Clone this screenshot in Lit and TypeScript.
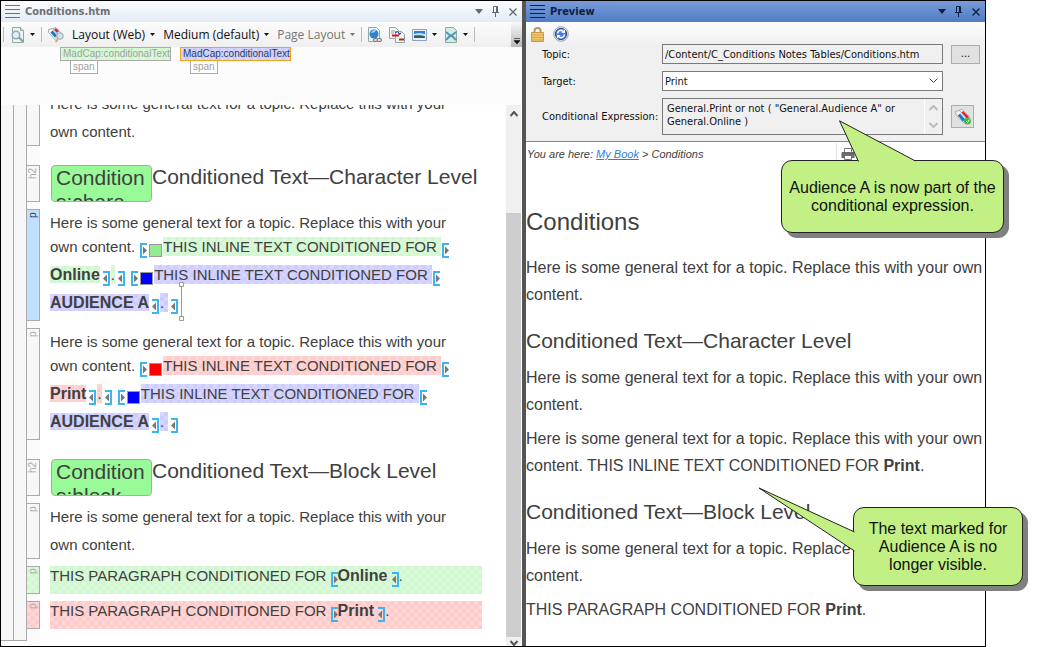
import { LitElement, html, css, svg } from "lit";
import { customElement, property } from "lit/decorators.js";

const caret = html`<svg class="caret" width="5" height="3" viewBox="0 0 5 3"><path d="M0 0h5L2.5 3z" fill="currentColor"/></svg>`;
const openMark = html`<svg class="mark open" width="7" height="15" viewBox="0 0 7 15"><path d="M7 1H1v13h6" fill="none" stroke="#3cb4f0" stroke-width="2"/><path d="M3 3.500v8l4-4z" fill="#777"/></svg>`;
const closeMark = html`<svg class="mark close" width="7" height="15" viewBox="0 0 7 15"><path d="M0 1h6v13H0" fill="none" stroke="#3cb4f0" stroke-width="2"/><path d="M4 3.500v8l-4-4z" fill="#777"/></svg>`;

const pageOutline = svg`<path d="M2.500 .5h8l3 3v12h-11z" fill="#eef6f3" stroke="#8fa8a4"/><path d="M10.500 .5v3h3" fill="#d5e5e1" stroke="#8fa8a4"/>`;

const icons = {
  pageZoom: html`<svg width="15" height="16" viewBox="0 0 15 16">${pageOutline}<circle cx="6" cy="8" r="3.800" fill="#dceef6" stroke="#98a8ae" stroke-width="1.500"/><path d="M9 10.500l4 4" stroke="#8b9ea6" stroke-width="2.200"/></svg>`,
  tags: html`<svg width="16" height="16" viewBox="0 0 16 16"><path d="M5 1.500l3-1 5 6-2 4z" fill="#fff" stroke="#999" stroke-width=".8"/><path d="M7 2l3 3" stroke="#e0202c" stroke-width="2.500"/><path d="M.5 2.500l4-1 6 7-3.500 4-6.500-7z" fill="#f5f5f5" stroke="#999" stroke-width=".8"/><path d="M3.500 4.500l4.500 5" stroke="#1878c8" stroke-width="3"/><circle cx="12" cy="9" r="3.300" fill="#d4e0ea" stroke="#98a8b6"/><path d="M10 12l-2.500 3" stroke="#d8a878" stroke-width="2"/></svg>`,
  web: html`<svg width="14" height="16" viewBox="0 0 14 16"><path d="M.5 .5h8l3 3v11H.5z" fill="#eef7f4" stroke="#8fa8a4"/><circle cx="6" cy="7" r="4.500" fill="#2f82d0"/><path d="M3 6q2-4 5-3-1 3-5 3z" fill="#9fd3f7"/><rect x="5.500" y="11.500" width="4.500" height="3" rx="1.500" fill="#ddd" stroke="#777"/><rect x="9" y="11.500" width="4.500" height="3" rx="1.500" fill="#ddd" stroke="#777"/></svg>`,
  merge: html`<svg width="16" height="16" viewBox="0 0 16 16"><path d="M.5 .5h6l3 3v8h-9z" fill="#f1f8f6" stroke="#8fa8a4"/><path d="M6.500 4.500h6l3 3v8h-9z" fill="#f1f8f6" stroke="#8fa8a4"/><path d="M2 4h4M2 6h3" stroke="#999"/><path d="M6 5.500q3-2 5 1.500M9 6.500l2 1 1-2" fill="none" stroke="#2444a8"/><path d="M3 8.500h7M10 12.500h5" stroke="#d01818" stroke-width="2"/></svg>`,
  image: html`<svg width="15" height="12" viewBox="0 0 15 12"><path d="M.5 .5h14v11H.5z" fill="#e9f2fa" stroke="#8ba3b8"/><path d="M2 2h11v4H2z" fill="#2f7fd4"/><path d="M2 5q5-2 11 0v2H2z" fill="#b9dcf3"/><path d="M2 6.500q7-1 11 1V9H2z" fill="#2f5c54"/></svg>`,
  sheetX: html`<svg width="14" height="16" viewBox="0 0 14 16"><path d="M1.500 .5h8l3 3v12h-11z" fill="#d7ebe5" stroke="#8fa8a4"/><path d="M2 5l5 4 5-4M6 9l-4 4M8 9l4 4" fill="none" stroke="#4f98b4" stroke-width="2"/></svg>`,
  lock: html`<svg width="13" height="15" viewBox="0 0 13 15"><path d="M3.500 6V4a3 3 0 0 1 6 0v2" fill="none" stroke="#b49a62" stroke-width="2"/><path d="M.5 5.500h12v9H.5z" fill="#efc76c" stroke="#c99c44"/><path d="M1 8h11M1 10.500h11M1 13h11" stroke="#d3a54c"/></svg>`,
  refresh: html`<svg width="16" height="16" viewBox="0 0 16 16"><circle cx="8" cy="8" r="7.300" fill="#e0e0e4" stroke="#a5a5ad"/><circle cx="8" cy="8" r="5.600" fill="#4c7ce0" stroke="#274aa4"/><path d="M4.500 7.500a3.500 3.500 0 0 1 6-2M11.500 8.500a3.500 3.500 0 0 1-6 2" fill="none" stroke="#fff" stroke-width="1.600"/><path d="M12 3.500V7H8.500zM4 12.500V9h3.500z" fill="#fff"/></svg>`,
  tagsCheck: html`<svg width="16" height="16" viewBox="0 0 16 16"><path d="M4 1.500l3-1 8 8-2 4z" fill="#fff" stroke="#999" stroke-width=".8"/><path d="M7 3l6 6" stroke="#e0202c" stroke-width="3"/><path d="M.5 2.500l4-1 7 8-3 4-7.500-8z" fill="#f5f5f5" stroke="#999" stroke-width=".8"/><path d="M4 5.500l5 6" stroke="#1878c8" stroke-width="3"/><circle cx="12.500" cy="12" r="3.500" fill="#45b649"/><path d="M11 12l1.500 1.500 2-3" fill="none" stroke="#fff"/></svg>`,
  printer: html`<svg width="14" height="14" viewBox="0 0 14 14"><path d="M3.500 5V1.500h7V5" fill="#fff" stroke="#777"/><path d="M1 5h12l.5 1v5H.5V6z" fill="#6a6a6a"/><path d="M3.500 8.500h7v4h-7z" fill="#fff" stroke="#777"/></svg>`,
};

/** Caption strip at the top of a docked pane. */
@customElement("pane-title")
class PaneTitle extends LitElement {
  @property() label = "";
  static styles = css`
    :host { display: flex; align-items: center; height: 21px; padding: 0 1px 0 4px; color: var(--title-ink); background: var(--title-bg);
      font: bold 11px/16px "DejaVu Sans Condensed", "DejaVu Sans", sans-serif; font-stretch: condensed; }
    .grip { width: 15px; height: 13px; margin-right: 5px; background: repeating-linear-gradient(var(--grip) 0 1px, transparent 1px 4px); }
    h1 { flex: 1; margin: 0; font: inherit; }
    button { display: grid; place-items: center; width: 17px; height: 16px; padding: 0; border: 0; background: none; color: var(--title-ctl); }
  `;
  render() {
    return html`<span class="grip"></span><h1>${this.label}</h1>
      <button aria-label="Window menu"><svg width="8" height="5" viewBox="0 0 8 5"><path d="M0 0h8L4 5z" fill="currentColor"/></svg></button>
      <button aria-label="Pin"><svg width="7" height="11" viewBox="0 0 7 11"><path d="M1.500 6V.5h4V6M0 6.500h7M3.500 7v4M4.500 1v5" fill="none" stroke="currentColor"/></svg></button>
      <button aria-label="Close"><svg width="8" height="8" viewBox="0 0 8 8"><path d="M.5 .5l7 7M7.500 .5l-7 7" stroke="currentColor" stroke-width="1.300"/></svg></button>`;
  }
}

/** XML editor pane: toolbar, span bars and the topic with its structure bars. */
@customElement("editor-pane")
class EditorPane extends LitElement {
  static styles = css`
    :host { display: flex; flex-direction: column; min-width: 0; background: #fcfcfc;
      --title-ink: #6d7178; --title-ctl: #63676e; --grip: #6d7178; --title-bg: linear-gradient(#fbfcfe, #e3ebf6);
      --green: repeating-conic-gradient(#d0f7d0 0 25%, #d9f9d9 0 50%) 0 0 / 8px 8px;
      --blue: repeating-conic-gradient(#ccccff 0 25%, #d6d6ff 0 50%) 0 0 / 8px 8px;
      --red: repeating-conic-gradient(#ffcaca 0 25%, #ffd6d6 0 50%) 0 0 / 8px 8px; }
    button { display: flex; align-items: center; padding: 0; border: 0; background: none; font: inherit; color: inherit; white-space: nowrap; }
    .toolbar { display: flex; align-items: center; height: 25px; padding-left: 2px; background: linear-gradient(#fcfcfc, #efefef);
      color: #111; font: 12px/16px "Open Sans", "Noto Sans", sans-serif; }
    .sep { width: 1px; height: 15px; background: #bbb; }
    .toolbar button { margin-left: 7px; }
    .caret { margin-left: 5px; }
    .toolbar .text { margin-left: 8px; }
    .toolbar .dim { color: #777; }
    .toolbar .sep + button { margin-left: 6px; }
    .toolbar .sep { margin-left: 6px; }
    .toolbar .sep:first-child { margin-left: 0; }
    .toolbar button.more { align-self: stretch; align-items: flex-end; justify-content: center; width: 11px; margin-left: auto; padding-bottom: 3px; background: linear-gradient(#f8f8f8, #b8b8b8); }
    .spans { display: flex; gap: 9px; height: 58px; padding-left: 59px; font: 10px/12px "Liberation Sans", Arial, sans-serif; color: #a0a0a0; }
    .chip { width: 107px; padding-left: 2px; border: 1px solid #aaa; background: var(--green); }
    .active .chip { border-color: #f5a21b; background: var(--blue); color: #24405c; }
    .sub { width: 24px; margin-left: 10px; padding-left: 2px; border: 1px solid #aaa; border-top: 0; background: #fff; }
    .doc { display: flex; flex: 1; min-height: 0; overflow: hidden; background: #fff; }
    .rail { width: 12px; margin-bottom: 5px; border: solid #aaa; border-width: 0 1px 1px 0; background: #f7f7f7; }
    .flow { display: flex; flex: 1; flex-direction: column; justify-content: flex-end; gap: 7px; min-width: 0; padding: 0 24px 17px 0;
      background: linear-gradient(90deg, #fbfbfb 13px, #fff 13px); color: #404040; font: 15px/28px "Liberation Sans", Arial, sans-serif; }
    .row { display: grid; grid-template-columns: 13px 1fr; column-gap: 10px; flex: none; }
    .row.head { margin-top: 12px; height: 37px; }
    .bar { padding: 0 0 2px; border: solid #aaa; border-width: 1px 0 1px 1px; box-sizing: border-box; background: #f7f7f7; color: #aaa;
      font: 10px/12px "Liberation Sans", Arial, sans-serif; writing-mode: vertical-rl; transform: rotate(180deg); text-align: right; }
    .bar.sel { background: #bfdfff; color: #335; }
    p, h2 { margin: 0; }
    p { padding-right: 12px; }
    b { font-size: 16px; line-height: 20px; }
    .mixed { padding: 2px 12px 2px 0; line-height: 24px; }
    .g { background: var(--green); } .b { background: var(--blue); } .r { background: var(--red); }
    span.g, span.b, span.r { padding: 1px 0; }
    .band { height: 28px; line-height: 20px; white-space: nowrap; }
    .mark { margin-bottom: 5px; vertical-align: -11px; }
    .open { margin-left: 1px; margin-right: 1px; } .close { margin-left: 3px; margin-right: 1px; }
    .band .mark { margin: 0; vertical-align: -6px; }
    .sq { display: inline-block; width: 11px; height: 11px; margin-left: 1px; margin-right: 1px; border: 1px solid #999; vertical-align: -5px; }
    .sq.lime { background: #90ee90; } .sq.navy { background: #00f; } .sq.hot { background: #f00; }
    .here { position: relative; }
    .here svg { position: absolute; left: 0; top: -12px; }
    h2 { display: flex; font-size: 21px; font-weight: normal; line-height: 24px; white-space: nowrap; }
    .snip { width: 95px; height: 35px; margin-left: 1px; padding-left: 4px; overflow: hidden; border: 1px solid #aaa; border-radius: 4px; background: #98fb98;
      white-space: normal; word-break: break-all; }
    .scroll { display: flex; flex-direction: column; align-items: center; width: 15px; margin-right: 1px; background: #f0f0f0; color: #555; }
    .scroll button { flex: none; justify-content: center; width: 15px; height: 17px; }
    .scroll button:last-child { height: 9px; align-items: flex-end; overflow: hidden; }
    .track { display: flex; flex: 1; flex-direction: column; width: 15px; padding-top: 91px; }
    .thumb { height: 100%; background: #cdcdcd; }
  `;
  private plain = "Here is some general text for a topic. Replace this with your own content.";
  private audience = html`${openMark}<i class="sq navy"></i><span class="b">THIS INLINE TEXT CONDITIONED FOR </span>${openMark} <b class="b">AUDIENCE A</b>${closeMark}<span class="b">.&nbsp;</span>${closeMark}`;
  private row(tag: string, body: unknown, kind = "") {
    return html`<div class="row ${tag === "h2" ? "head" : ""}"><span class="bar ${kind}">${tag}</span>${body}</div>`;
  }
  render() {
    const chevron = (d: string) => html`<svg width="8" height="6" viewBox="0 0 8 6"><path d=${d} fill="none" stroke="currentColor" stroke-width="2"/></svg>`;
    return html`
      <pane-title label="Conditions.htm"></pane-title>
      <div class="toolbar" role="toolbar">
        <span class="sep"></span>
        <button aria-label="Preview">${icons.pageZoom}${caret}</button>
        <span class="sep"></span>
        <button aria-label="Conditions">${icons.tags}</button>
        <button class="text">Layout (Web)${caret}</button>
        <button class="text">Medium (default)${caret}</button>
        <button class="text dim">Page Layout${caret}</button>
        <span class="sep"></span>
        <button aria-label="Insert link">${icons.web}</button>
        <button aria-label="Cross reference">${icons.merge}</button>
        <button aria-label="Insert image">${icons.image}${caret}</button>
        <button aria-label="Stylesheet">${icons.sheetX}${caret}</button>
        <span class="sep"></span>
        <button class="more" aria-label="More"><svg width="6" height="6" viewBox="0 0 6 6"><path d="M0 .5h6M0 2.500h6L3 6z" fill="#111" stroke="#111" stroke-width=".6"/></svg></button>
      </div>
      <div class="spans">
        <div><div class="chip">MadCap:conditionalText</div><div class="sub">span</div></div>
        <div class="active"><div class="chip">MadCap:conditionalText</div><div class="sub">span</div></div>
      </div>
      <div class="doc">
        <div class="rail"></div><div class="rail"></div>
        <div class="flow">
          ${this.row("p", html`<p>${this.plain}</p>`)}
          ${this.row("h2", html`<h2><span class="snip">Conditions:chara</span>Conditioned Text—Character Level</h2>`)}
          ${this.row("p", html`<p class="mixed">${this.plain} ${openMark}<i class="sq lime"></i><span class="g">THIS INLINE TEXT CONDITIONED FOR </span>${openMark} <b class="g">Online</b>${closeMark}<span class="g">.</span>${closeMark} ${this.audience}<span class="here"><svg width="5" height="39" viewBox="0 0 5 39"><path d="M2.500 5v29" stroke="#999"/><path d="M.5 .5h4v4h-4zM.5 34.500h4v4h-4z" fill="#fff" stroke="#999"/></svg></span></p>`, "sel")}
          ${this.row("p", html`<p class="mixed">${this.plain} ${openMark}<i class="sq hot"></i><span class="r">THIS INLINE TEXT CONDITIONED FOR </span>${openMark} <b class="r">Print</b>${closeMark}<span class="r">.</span>${closeMark} ${this.audience}</p>`)}
          ${this.row("h2", html`<h2><span class="snip">Conditions:block</span>Conditioned Text—Block Level</h2>`)}
          ${this.row("p", html`<p>${this.plain}</p>`)}
          ${this.row("p", html`<p class="band g">THIS PARAGRAPH CONDITIONED FOR ${openMark}<b>Online</b> ${closeMark}.</p>`, "g")}
          ${this.row("p", html`<p class="band r">THIS PARAGRAPH CONDITIONED FOR ${openMark}<b>Print</b> ${closeMark}.</p>`, "r")}
        </div>
        <div class="scroll">
          <button aria-label="Scroll up">${chevron("M.5 5l3.500-4 3.500 4")}</button>
          <div class="track"><div class="thumb"></div></div>
          <button aria-label="Scroll down">${chevron("M.5 1l3.500 4 3.500-4")}</button>
        </div>
      </div>`;
  }
}

/** Preview pane: target settings above the generated topic. */
@customElement("preview-pane")
class PreviewPane extends LitElement {
  static styles = css`
    :host { display: flex; flex-direction: column; min-width: 0; background: #fff;
      --title-ink: #0b1f44; --title-ctl: #0b1f44; --grip: #0b1f44; --title-bg: linear-gradient(#7a9cd8, #4f7cc6); }
    .tools { display: flex; align-items: center; gap: 9px; height: 22px; padding: 2px 5px 0; box-sizing: border-box; background: linear-gradient(#fdfdfd, #f0f0f0); }
    button { display: grid; place-items: center; padding: 0; border: 0; background: none; font: inherit; color: inherit; }
    form { display: grid; grid-template-columns: 112px 1fr 29px; column-gap: 8px; row-gap: 7px; align-items: center; padding: 0 5px 6px 16px;
      border-bottom: 1px solid #888; background: #f0f0f0; color: #111; font: 11px/13px "DejaVu Sans Condensed", "DejaVu Sans", sans-serif; font-stretch: condensed; }
    label { white-space: nowrap; }
    input, select, .expr { box-sizing: border-box; width: 100%; height: 20px; margin: 0; padding: 0 2px; border: 1px solid #7a7a7a; border-radius: 0; background: #f0f0f0; color: inherit; font: inherit; }
    select { appearance: none; background: #fff url("data:image/svg+xml,%3Csvg xmlns='http://www.w3.org/2000/svg' width='9' height='6'%3E%3Cpath d='M.5 .5l4 4 4-4' fill='none' stroke='%23444'/%3E%3C/svg%3E") no-repeat right 4px center; }
    .expr { display: flex; height: 37px; padding: 0; }
    textarea { flex: 1; min-width: 0; padding: 3px 4px; overflow: hidden; border: 0; resize: none; background: none; color: inherit; font: inherit; }
    .nudge { display: flex; flex-direction: column; justify-content: space-around; align-items: center; width: 17px; border-left: 1px solid #fff; color: #bbb; }
    .box { width: 29px; height: 19px; border: 1px solid #adadad; background: #e1e1e1; line-height: 8px; }
    .box.sq { width: 23px; height: 23px; }
    .topic { flex: 1; min-height: 0; overflow: hidden; color: #404040; font: 16px/27px "Liberation Sans", Arial, sans-serif; }
    .crumbs { display: flex; align-items: center; height: 24px; padding-left: 1px; font: italic 11px/14px "Liberation Sans", Arial, sans-serif; white-space: pre; }
    .crumbs a { color: #2f7fd6; }
    .print { width: 54px; height: 22px; margin-left: auto; margin-right: 95px; padding-right: 30px; border: solid #e4e4e4; border-width: 0 1px; }
    h1, h2, p { margin: 0; font-weight: normal; }
    h1 { margin-top: 42px; font-size: 24px; line-height: 28px; }
    h1 + p { margin-top: 18px; }
    h2 { margin-top: 20px; font-size: 21px; line-height: 26px; }
    h2 + p { margin-top: 10px; }
    p + p { margin-top: 7px; }
  `;
  render() {
    const general = "Here is some general text for a topic. Replace this with your own content.";
    return html`
      <pane-title label="Preview"></pane-title>
      <div class="tools"><button aria-label="Lock">${icons.lock}</button><button aria-label="Refresh">${icons.refresh}</button></div>
      <form>
        <label for="topic">Topic:</label><input id="topic" readonly value="/Content/C_Conditions Notes Tables/Conditions.htm"><button type="button" class="box" aria-label="Browse">...</button>
        <label for="target">Target:</label><select id="target"><option>Print</option></select><span></span>
        <label for="expr">Conditional Expression:</label>
        <div class="expr"><textarea id="expr" readonly .value=${'General.Print or not ( "General.Audience A" or General.Online )'}></textarea>
          <span class="nudge"><svg width="9" height="6" viewBox="0 0 9 6"><path d="M.5 5l4-4 4 4" fill="none" stroke="currentColor" stroke-width="2"/></svg><svg width="9" height="6" viewBox="0 0 9 6"><path d="M.5 1l4 4 4-4" fill="none" stroke="currentColor" stroke-width="2"/></svg></span></div>
        <button type="button" class="box sq" aria-label="Edit conditions">${icons.tagsCheck}</button>
      </form>
      <article class="topic">
        <div class="crumbs">You are here: <a href="#">My Book</a> &gt; Conditions<button class="print" aria-label="Print">${icons.printer}</button></div>
        <h1>Conditions</h1>
        <p>${general}</p>
        <h2>Conditioned Text—Character Level</h2>
        <p>${general}</p>
        <p>${general} THIS INLINE TEXT CONDITIONED FOR <b>Print</b>.</p>
        <h2>Conditioned Text—Block Level</h2>
        <p>${general}</p>
        <p>THIS PARAGRAPH CONDITIONED FOR <b>Print</b>.</p>
      </article>`;
  }
}

@customElement("app-root")
class AppRoot extends LitElement {
  static styles = css`
    :host { display: block; height: 100vh; padding-right: 51px; box-sizing: border-box; background: #fff; }
    .frame { position: relative; display: flex; height: 100%; box-sizing: border-box; border: 1px solid #000; }
    editor-pane { flex: 521; }
    preview-pane { flex: 459; }
    .split { width: 4px; background: #555; }
    .note { position: absolute; display: grid; place-items: center; box-sizing: border-box; border: 1px solid #222; border-radius: 11px; background: #c2f084;
      box-shadow: 5px 5px 0 #808080; color: #111; font: 16px/18px "Liberation Sans", Arial, sans-serif; text-align: center; }
    .note svg { position: absolute; }
    .note p { margin: 0; white-space: pre-line; }
    .first { right: -19px; top: 159px; width: 223px; height: 73px; }
    .first svg { left: 57px; top: -41px; }
    .second { right: -38px; top: 506px; width: 170px; height: 79px; }
    .second svg { left: -96px; top: -21px; }
  `;
  render() {
    return html`<div class="frame">
      <editor-pane></editor-pane><div class="split"></div><preview-pane></preview-pane>
      <aside class="note first"><svg width="78" height="42" viewBox="0 0 78 42"><path d="M19.500 41.500L.5 .8l76 40.200" fill="#c2f084" stroke="#222"/></svg><p>Audience A is now part of the
conditional expression.</p></aside>
      <aside class="note second"><svg width="97" height="66" viewBox="0 0 97 66"><path d="M96.500 45L1 1l95.500 63" fill="#c2f084" stroke="#222"/></svg><p>The text marked for
Audience A is no
longer visible.</p></aside>
    </div>`;
  }
}
